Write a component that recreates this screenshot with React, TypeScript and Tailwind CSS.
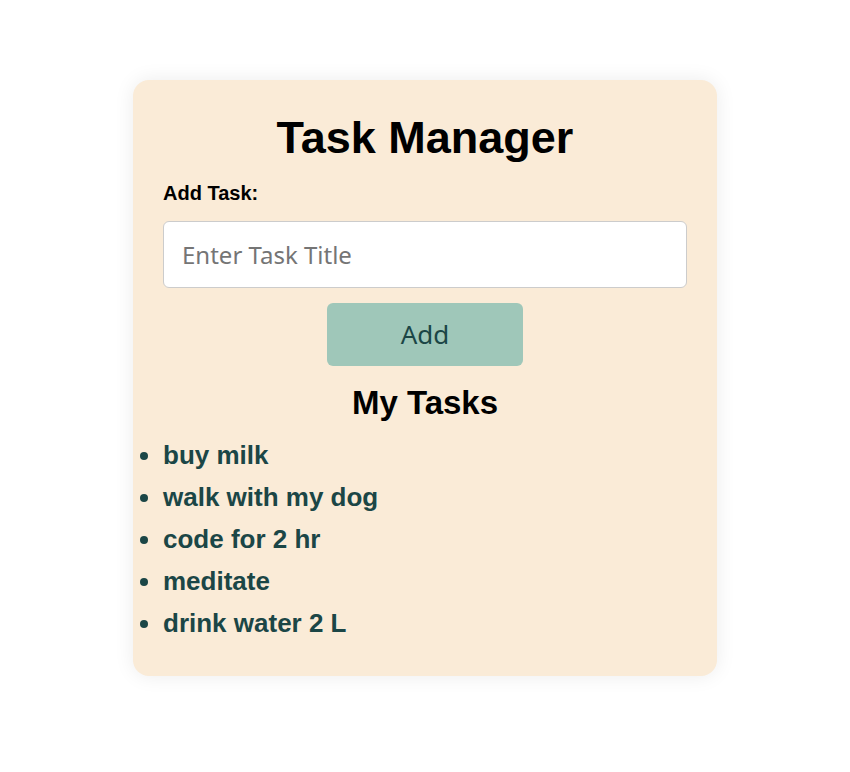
export default function App() {
  const tasks = ["buy milk", "walk with my dog", "code for 2 hr", "meditate", "drink water 2 L"];
  return (
    <div className="min-h-screen bg-white flex justify-center pt-20">
      <div
        className="w-[584px] h-[596px] bg-[#faebd7] rounded-2xl shadow-[0_0_20px_rgba(0,0,0,0.08)] px-[30px] pt-[30px]"
        style={{ fontFamily: '"Liberation Sans Narrow", "Liberation Sans", Arial, sans-serif' }}
      >
        <h1 className="text-center text-[45px] font-bold leading-[56px] text-black">Task Manager</h1>
        <label className="block mt-[15px] text-[20px] font-bold leading-[24px] text-black">Add Task:</label>
        <input
          type="text"
          placeholder="Enter Task Title"
          className="block w-full h-[67px] mt-[16px] bg-white border border-[#cccccc] rounded-md px-[18px] text-[24px] text-black placeholder:text-[#757575] outline-none"
          style={{ fontFamily: '"Noto Sans", sans-serif' }}
        />
        <div className="flex justify-center mt-[15px]">
          <button
            className="w-[196px] h-[63px] bg-[#9fc7b9] rounded-md text-[26px] text-[#1b4646]"
            style={{ fontFamily: '"Noto Sans", sans-serif' }}
          >
            Add
          </button>
        </div>
        <h2 className="text-center text-[33px] font-bold leading-[40px] mt-[17px] text-black">My Tasks</h2>
        <ul className="list-disc mt-[11px] text-[26px] font-bold text-[#1b4646] leading-[42px]">
          {tasks.map((t) => (
            <li key={t}>{t}</li>
          ))}
        </ul>
      </div>
    </div>
  );
}
